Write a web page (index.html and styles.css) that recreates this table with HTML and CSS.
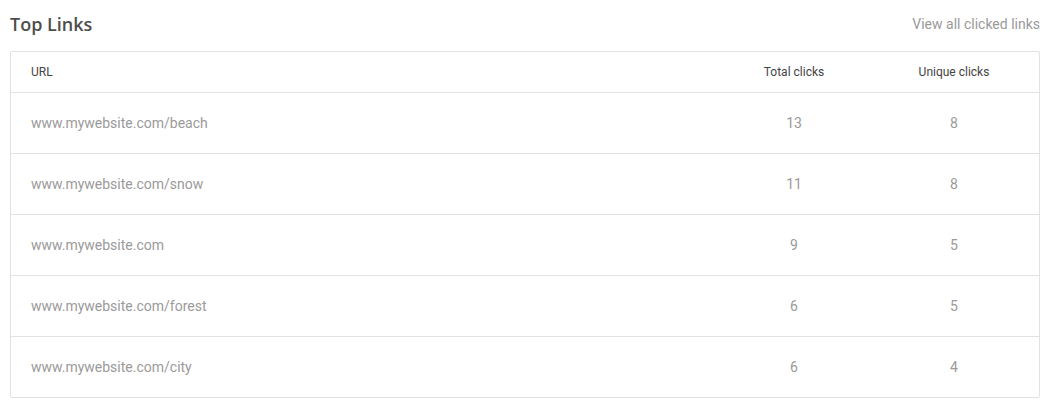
FILE: index.html
```html
<!DOCTYPE html>
<html>
<head>
<meta charset="utf-8">
<link rel="stylesheet" href="styles.css">
</head>
<body>
<div class="panel">
  <div class="panel-head">
    <h2 class="title">Top Links</h2>
    <a class="view-all">View all clicked links</a>
  </div>
  <div class="table">
    <div class="row head">
      <div class="c-url">URL</div>
      <div class="c-num">Total clicks</div>
      <div class="c-num">Unique clicks</div>
    </div>
    <div class="row"><div class="c-url">www.mywebsite.com/beach</div><div class="c-num">13</div><div class="c-num">8</div></div>
    <div class="row"><div class="c-url">www.mywebsite.com/snow</div><div class="c-num">11</div><div class="c-num">8</div></div>
    <div class="row"><div class="c-url">www.mywebsite.com</div><div class="c-num">9</div><div class="c-num">5</div></div>
    <div class="row"><div class="c-url">www.mywebsite.com/forest</div><div class="c-num">6</div><div class="c-num">5</div></div>
    <div class="row"><div class="c-url">www.mywebsite.com/city</div><div class="c-num">6</div><div class="c-num">4</div></div>
  </div>
</div>
</body>
</html>
```
FILE: styles.css
```css
html, body { margin: 0; padding: 0; background: #fff; }
body { font-family: Roboto, "Liberation Sans", sans-serif; }
.panel { padding: 0 10px 0 10px; }
.panel-head {
  display: flex;
  justify-content: space-between;
  align-items: center;
  height: 50px;
}
.title {
  margin: 0;
  font-family: "Open Sans", sans-serif;
  font-weight: 600;
  font-size: 18px;
  color: #4d4d4d;
  position: relative;
  top: -1px;
}
.view-all {
  font-size: 14px;
  color: #9a9a9a;
  position: relative;
  top: -1px;
}
.table {
  border: 1px solid #e2e2e2;
  border-radius: 2px;
  margin-top: 1px;
}
.row {
  display: grid;
  grid-template-columns: 1fr 160px 160px;
  padding: 0 5px 0 20px;
  height: 60px;
  align-items: center;
  border-top: 1px solid #e2e2e2;
  font-size: 14px;
  color: #9a9a9a;
}
.row.head {
  border-top: none;
  height: 40px;
  font-size: 12px;
  color: #444;
}
.c-num { text-align: center; }
```
